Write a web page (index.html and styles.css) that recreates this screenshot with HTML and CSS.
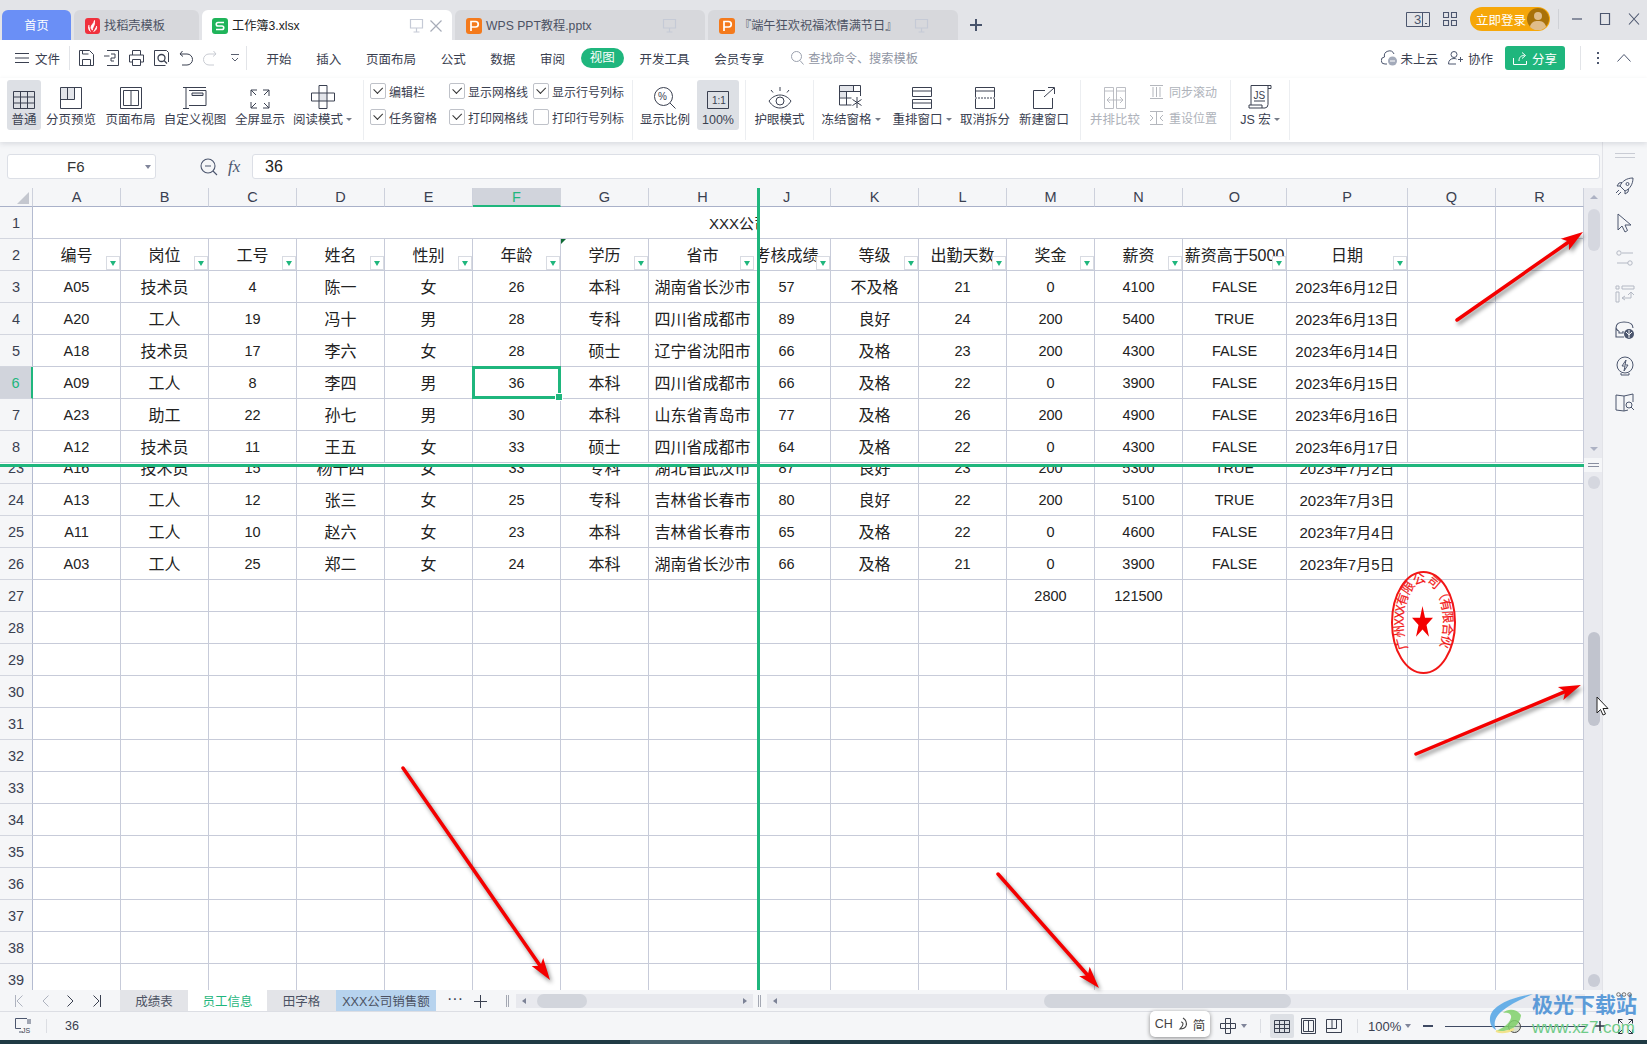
FILE: index.html
```html
<!DOCTYPE html>
<html lang="zh-CN">
<head>
<meta charset="utf-8">
<title>工作簿3.xlsx</title>
<link rel="stylesheet" href="styles.css">
</head>
<body>
<div class="app">

<header class="tabbar">
  <div class="tab home">首页</div>
  <div class="tab t-daoke">
    <svg class="ticon" width="15" height="16" viewBox="0 0 15 16"><rect width="15" height="16" rx="3" fill="#f0313d"/><path d="M9.5 2.5C9 6 6 6.5 6 9.5c0 1 .5 2 1.5 2.5C7 9.5 10 8.5 9.5 2.5zM4 7c-1 2-.5 5 1.5 6.5M11.5 8c.5 2.5-.5 4.5-3 5.5" fill="#fff" stroke="#fff" stroke-width=".9"/></svg>
    <span>找稻壳模板</span>
  </div>
  <div class="tab t-active">
    <svg class="ticon" width="16" height="16" viewBox="0 0 16 16"><rect width="16" height="16" rx="3" fill="#1fb45a"/><path d="M12 4.5H6a1.7 1.7 0 0 0 0 3.5h4a1.7 1.7 0 0 1 0 3.5H4" fill="none" stroke="#fff" stroke-width="1.6"/></svg>
    <span class="tname">工作簿3.xlsx</span>
    <svg class="pin" width="15" height="15" viewBox="0 0 15 15"><path d="M1.5 1.5h12V10h-12zM7.5 10v4M4.5 14h6" fill="none" stroke="#c5cad6" stroke-width="1.2"/></svg>
    <svg class="closex" width="14" height="14" viewBox="0 0 14 14"><path d="M1.5 1.5l11 11M12.5 1.5l-11 11" stroke="#a7acb8" stroke-width="1.2"/></svg>
  </div>
  <div class="tab t-doc">
    <svg class="ticon" width="16" height="16" viewBox="0 0 16 16"><rect width="16" height="16" rx="3" fill="#f47a1c"/><path d="M5 13V3.5h4.5a2.7 2.7 0 0 1 0 5.5H5" fill="none" stroke="#fff" stroke-width="1.7"/></svg>
    <span class="tname">WPS PPT教程.pptx</span>
    <svg class="pin pin-doc" width="15" height="15" viewBox="0 0 15 15"><path d="M1.5 1.5h12V10h-12zM7.5 10v4M4.5 14h6" fill="none" stroke="#c5cad6" stroke-width="1.2"/></svg>
  </div>
  <div class="tab t-doc">
    <svg class="ticon" width="16" height="16" viewBox="0 0 16 16"><rect width="16" height="16" rx="3" fill="#f47a1c"/><path d="M5 13V3.5h4.5a2.7 2.7 0 0 1 0 5.5H5" fill="none" stroke="#fff" stroke-width="1.7"/></svg>
    <span class="tname">『端午狂欢祝福浓情满节日』</span>
    <svg class="pin pin-doc2" width="15" height="15" viewBox="0 0 15 15"><path d="M1.5 1.5h12V10h-12zM7.5 10v4M4.5 14h6" fill="none" stroke="#c5cad6" stroke-width="1.2"/></svg>
  </div>
  <svg class="plus" width="14" height="14" viewBox="0 0 14 14"><path d="M7 1v12M1 7h12" stroke="#48536b" stroke-width="2"/></svg>
  <div class="winctl">
    <svg class="wc-3" width="24" height="15" viewBox="0 0 24 15"><path d="M.5.5h23v14H.5zM16.5.5v14" fill="none" stroke="#4c566e"/><path d="M19 11.5h2" stroke="#4c566e"/><text x="8" y="12" class="wc-num">3</text></svg>
    <svg class="wc-grid" width="14" height="14" viewBox="0 0 14 14"><path d="M.5.5h5v5h-5zM8.5.5h5v5h-5zM.5 8.5h5v5h-5zM8.5 8.5h5v5h-5z" fill="none" stroke="#4c566e" stroke-width="1.1"/></svg>
    <div class="login"><span>立即登录</span>
      <svg width="22" height="22" viewBox="0 0 22 22"><circle cx="11" cy="11" r="11" fill="#a9720a"/><circle cx="11" cy="8" r="4" fill="#e0bd8a"/><path d="M3 19c1-5 4-6 8-6s7 1 8 6a11 11 0 0 1-16 0z" fill="#e0bd8a"/></svg>
    </div>
    <i class="wsep"></i>
    <svg class="wc-min" width="12" height="12" viewBox="0 0 12 12"><path d="M1 6h10" stroke="#4c566e" stroke-width="1.2"/></svg>
    <svg class="wc-max" width="12" height="14" viewBox="0 0 12 14"><path d="M1.5 1.5h9v11h-9z" fill="none" stroke="#4c566e" stroke-width="1.2"/></svg>
    <svg class="wc-close" width="12" height="14" viewBox="0 0 12 14"><path d="M1 1.5l10 11M11 1.5l-10 11" stroke="#4c566e" stroke-width="1.1"/></svg>
  </div>
</header>

<nav class="menubar">
  <svg class="m-burger" width="14" height="12" viewBox="0 0 14 12"><path d="M0 1.5h14M0 6h14M0 10.5h14" stroke="#3a4050" stroke-width="1.1"/></svg>
  <span class="m-file">文件</span>
  <i class="msep"></i>
  <div class="qa">
    <svg width="15" height="16" viewBox="0 0 15 16"><path d="M.5.5h10l4 4v11H.5zM3.5 15.5v-6h8v6M3.5.5V4h6" fill="none" stroke="#3a4050"/></svg>
    <svg width="15" height="16" viewBox="0 0 15 16"><path d="M3 .5h11.5v15H3M0 6h5.5M7 4h4v4H7v3h3" fill="none" stroke="#3a4050"/></svg>
    <svg width="15" height="16" viewBox="0 0 15 16"><path d="M3.5 5V.5h8V5M3.5 12H.5V5h14v7h-3M3.5 9.5h8v6h-8z" fill="none" stroke="#3a4050"/></svg>
    <svg width="15" height="16" viewBox="0 0 15 16"><path d="M14.5 12V2.5l-2-2H.5v15h11" fill="none" stroke="#3a4050"/><circle cx="7.5" cy="8" r="3.5" fill="none" stroke="#3a4050" stroke-width="1.3"/><path d="M10 10.5l3 3" stroke="#3a4050" stroke-width="1.3"/></svg>
    <svg width="14" height="16" viewBox="0 0 14 16"><path d="M3.5 1L1 4l3 2.5M1 4h7a5 5 0 0 1 0 11H3" fill="none" stroke="#3a4050"/></svg>
    <svg width="14" height="16" viewBox="0 0 14 16"><path d="M10.5 1L13 4l-3 2.5M13 4H6a5 5 0 0 0 0 11h5" fill="none" stroke="#c9ccd3"/></svg>
    <svg class="qa-more" width="8" height="10" viewBox="0 0 8 10"><path d="M0 1.5h8M1 5l3 3 3-3" fill="none" stroke="#5a6070"/></svg>
  </div>
  <i class="msep msep2"></i>
  <div class="mtabs">
    <span>开始</span><span>插入</span><span>页面布局</span><span>公式</span><span>数据</span><span>审阅</span><span class="mtab-on">视图</span><span>开发工具</span><span>会员专享</span>
  </div>
  <div class="search">
    <svg width="13" height="14" viewBox="0 0 13 14"><circle cx="5.5" cy="5.5" r="5" fill="none" stroke="#9aa0ad"/><path d="M9 9.5l3.5 4" stroke="#9aa0ad"/></svg>
    <span>查找命令、搜索模板</span>
  </div>
  <div class="m-right">
    <svg width="17" height="16" viewBox="0 0 17 16"><path d="M6 14H4a3.5 3.5 0 0 1-.5-7A5 5 0 0 1 13 4" fill="none" stroke="#4c566e"/><circle cx="11.5" cy="11" r="4.5" fill="#a3aaba"/><path d="M9 11h5" stroke="#fff"/></svg>
    <span class="mr-t mr-t1">未上云</span>
    <svg class="mr-i" width="16" height="14" viewBox="0 0 16 14"><circle cx="6" cy="3.5" r="3" fill="none" stroke="#4c566e"/><path d="M.5 13c0-3.5 2-5.5 5.5-5.5 1 0 2 .2 2.5.6M8 13H.5M12.5 6v5M10 8.5h5" fill="none" stroke="#4c566e"/></svg>
    <span class="mr-t">协作</span>
    <div class="share">
      <svg width="14" height="13" viewBox="0 0 14 13"><path d="M.5 6v6.500h13V9M6 9c0-4 2-5.500 5.500-5.500M9 .5l3.500 3-3.500 3" fill="none" stroke="#fff"/></svg>
      <span>分享</span>
    </div>
    <i class="msep msep3"></i>
    <svg class="mr-dots" width="4" height="14" viewBox="0 0 4 14"><path d="M2 1v2M2 6v2M2 11v2" stroke="#4c566e" stroke-width="2"/></svg>
    <svg class="mr-up" width="14" height="8" viewBox="0 0 14 8"><path d="M.5 7.5L7 .5l6.5 7" fill="none" stroke="#4c566e"/></svg>
  </div>
</nav>

<section class="ribbon">
  <div class="rb w34 on">
    <svg width="22" height="18" viewBox="0 0 22 18"><path d="M.5.5h21v17H.5zM7.5.5v17M14.5.5v17M.5 6h21M.5 12h21" fill="none" stroke="#3a4050"/></svg>
    <span>普通</span>
  </div>
  <div class="rb w60">
    <svg width="22" height="22" viewBox="0 0 22 22"><path d="M.5 12.5h14V.5H.5z" fill="#e3e5ea"/><path d="M.5.5h21v21H.5zM7.5.5v12M14.5.5v12M.5 12.5h14" fill="none" stroke="#3a4050"/></svg>
    <span>分页预览</span>
  </div>
  <div class="rb w59">
    <svg width="22" height="22" viewBox="0 0 22 22"><path d="M.5.5h21v21H.5zM3.5 3.5h15v15h-15zM11 3.5v15" fill="none" stroke="#3a4050"/></svg>
    <span>页面布局</span>
  </div>
  <div class="rb w70">
    <svg width="24" height="22" viewBox="0 0 24 22"><path d="M0 .5h6M0 21.5h6M3 .5v21M6 3.5h17v15H6" fill="none" stroke="#3a4050"/><path d="M9 8.5h11V6H9z" fill="#e3e5ea" stroke="#3a4050"/><path d="M6 .5h17" stroke="#3a4050"/></svg>
    <span>自定义视图</span>
  </div>
  <div class="rb w60">
    <svg width="20" height="20" viewBox="0 0 20 20"><path d="M1 7V1h6M1 1l5 5M19 7V1h-6M19 1l-5 5M1 13v6h6M1 19l5-5M19 13v6h-6M19 19l-5-5" fill="none" stroke="#3a4050"/></svg>
    <span>全屏显示</span>
  </div>
  <div class="rb w65">
    <svg width="24" height="24" viewBox="0 0 24 24"><path d="M8 8h8v8H8z" fill="#e3e5ea"/><path d="M8 .5h8V8h7.5v8H16v7.5H8V16H.5V8H8zM8 8v8M16 8v8M8 8h8M8 16h8" fill="none" stroke="#3a4050"/></svg>
    <span class="car">阅读模式</span>
  </div>
  <i class="rsep rs1"></i>
  <div class="checks">
    <label class="ck on">编辑栏</label>
    <label class="ck on">显示网格线</label>
    <label class="ck on">显示行号列标</label>
    <label class="ck on">任务窗格</label>
    <label class="ck on">打印网格线</label>
    <label class="ck">打印行号列标</label>
  </div>
  <i class="rsep"></i>
  <div class="rb w64">
    <svg width="22" height="22" viewBox="0 0 22 22"><circle cx="9.5" cy="9.5" r="9" fill="none" stroke="#3a4050"/><path d="M16 16l5.5 5.5" stroke="#3a4050"/><text x="4" y="13" class="pct">%</text></svg>
    <span>显示比例</span>
  </div>
  <div class="rb w42 on">
    <svg width="22" height="18" viewBox="0 0 22 18"><path d="M.5.5h21v17H.5z" fill="none" stroke="#3a4050"/><text x="5" y="13" class="oneone">1:1</text></svg>
    <span>100%</span>
  </div>
  <i class="rsep rs2"></i>
  <div class="rb w67">
    <svg width="24" height="22" viewBox="0 0 24 22"><path d="M1 14c3-4 7-6 11-6s8 2 11 6c-3 5-7 7-11 7s-8-2-11-7z" fill="none" stroke="#3a4050"/><circle cx="12" cy="14" r="4" fill="none" stroke="#3a4050"/><path d="M12 0v4M3 3l2 2.5M21 3l-2 2.5" stroke="#3a4050"/></svg>
    <span>护眼模式</span>
  </div>
  <i class="rsep"></i>
  <div class="rb w74">
    <svg width="24" height="24" viewBox="0 0 24 24"><path d="M.5.5H14V6H7v6H.5z" fill="#e3e5ea"/><path d="M.5.5h21V11M.5.5V20h12M.5 6.5h21M.5 13h12M7.500 6.5V20M14.5.5v6" fill="none" stroke="#3a4050"/><path d="M18 12v11M13.5 14.5l9 6M22.5 14.5l-9 6" stroke="#3a4050"/></svg>
    <span class="car">冻结窗格</span>
  </div>
  <div class="rb w68">
    <svg width="20" height="22" viewBox="0 0 20 22"><path d="M.5.5h19v9H.5zM.5 12.5h19v9H.5zM.5 4h19M.5 16h19" fill="none" stroke="#3a4050"/></svg>
    <span class="car">重排窗口</span>
  </div>
  <div class="rb w58">
    <svg width="20" height="22" viewBox="0 0 20 22"><path d="M.5 10V.5h19V10M.5 12v9.5h19V12M.5 4h19" fill="none" stroke="#3a4050"/><path d="M0 11h20" stroke="#3a4050" stroke-dasharray="2 1"/></svg>
    <span>取消拆分</span>
  </div>
  <div class="rb w60">
    <svg width="22" height="22" viewBox="0 0 22 22"><path d="M12 3.5H.5v18h19V11M11 10L21 1M15 .5h6.5V7" fill="none" stroke="#3a4050"/></svg>
    <span>新建窗口</span>
  </div>
  <i class="rsep rs3"></i>
  <div class="rb w68 dis">
    <svg width="22" height="22" viewBox="0 0 22 22"><path d="M.5 21.5V.5h9v21zM12.5 21.5V.5h9v21zM.5 4h9M12.5 4h9M3 13h16M6 10l-3 3 3 3M16 10l3 3-3 3" fill="none" stroke="#b4b7bd" stroke-width=".9"/></svg>
    <span>并排比较</span>
  </div>
  <div class="rstack">
    <div class="rs-item">
      <svg width="13" height="14" viewBox="0 0 13 14"><path d="M0 .5h13M0 13.5h13M3 2v10M6.5 2v10M10 2v10" fill="none" stroke="#b4b7bd"/></svg>
      <span>同步滚动</span>
    </div>
    <div class="rs-item">
      <svg width="13" height="14" viewBox="0 0 13 14"><path d="M0 .5h13M0 13.5h13M6.5 1v12M0 4l3 3-3 3M13 4l-3 3 3 3" fill="none" stroke="#b4b7bd"/></svg>
      <span>重设位置</span>
    </div>
  </div>
  <i class="rsep"></i>
  <div class="rb w58">
    <svg width="24" height="24" viewBox="0 0 24 24"><path d="M3 20V.5h17v19a3.5 3.5 0 0 1-3 3.5H1v-3h13v3M20 .5h3v3h-3" fill="none" stroke="#3a4050"/><text x="5.500" y="14" class="jsico">JS</text><path d="M6 16h11" stroke="#3a4050"/></svg>
    <span class="car">JS 宏</span>
  </div>
  <i class="rsep"></i>
</section>

<main class="main">
  <div class="work">
    <div class="formula">
      <div class="namebox"><span>F6</span><i class="tri"></i></div>
      <svg class="fz" width="18" height="18" viewBox="0 0 18 18"><circle cx="8" cy="8" r="7" fill="none" stroke="#4c566e" stroke-width="1.1"/><path d="M5 8h6M13 13l4 4" stroke="#4c566e" stroke-width="1.1"/></svg>
      <span class="fx">fx</span>
      <div class="finput">36</div>
    </div>

    <div class="sheetarea">
      <div class="grid">
        <table class="head">
          <colgroup><col class="c-rh"><col class="c88" span="7"><col class="c-h"><col class="c-j"><col class="c88" span="4"><col class="c-o"><col class="c-p"><col class="c88" span="2"></colgroup>
          <tr><th class="corner"><i></i></th><th>A</th><th>B</th><th>C</th><th>D</th><th>E</th><th class="act">F</th><th>G</th><th class="h">H</th><th class="j">J</th><th>K</th><th>L</th><th>M</th><th>N</th><th>O</th><th>P</th><th>Q</th><th>R</th></tr>
        </table>
        <div class="pane pane-top">
          <table>
            <colgroup><col class="c-rh"><col class="c88" span="7"><col class="c-h"><col class="c-j"><col class="c88" span="4"><col class="c-o"><col class="c-p"><col class="c88" span="2"></colgroup>
            <tr><th>1</th><td colspan="8" class="title">XXX公司员工信息表</td><td colspan="7"></td><td></td><td></td></tr>
            <tr><th>2</th><td class="z">编号<i class="flt"></i></td><td class="z">岗位<i class="flt"></i></td><td class="z">工号<i class="flt"></i></td><td class="z">姓名<i class="flt"></i></td><td class="z">性别<i class="flt"></i></td><td class="z note">年龄<i class="flt"></i></td><td class="z">学历<i class="flt"></i></td><td class="z h">省市<i class="flt fh"></i></td><td class="z j"><span class="over">考核成绩</span><i class="flt"></i></td><td class="z">等级<i class="flt"></i></td><td class="z">出勤天数<i class="flt"></i></td><td class="z">奖金<i class="flt"></i></td><td class="z">薪资<i class="flt"></i></td><td class="z">薪资高于5000<i class="flt"></i></td><td class="z">日期<i class="flt"></i></td><td></td><td></td></tr>
            <tr><th>3</th><td>A05</td><td class="z">技术员</td><td>4</td><td class="z">陈一</td><td class="z">女</td><td>26</td><td class="z">本科</td><td class="z h">湖南省长沙市</td><td class="j">57</td><td class="z">不及格</td><td>21</td><td>0</td><td>4100</td><td>FALSE</td><td class="d">2023年6月12日</td><td></td><td></td></tr>
            <tr><th>4</th><td>A20</td><td class="z">工人</td><td>19</td><td class="z">冯十</td><td class="z">男</td><td>28</td><td class="z">专科</td><td class="z h">四川省成都市</td><td class="j">89</td><td class="z">良好</td><td>24</td><td>200</td><td>5400</td><td>TRUE</td><td class="d">2023年6月13日</td><td></td><td></td></tr>
            <tr><th>5</th><td>A18</td><td class="z">技术员</td><td>17</td><td class="z">李六</td><td class="z">女</td><td>28</td><td class="z">硕士</td><td class="z h">辽宁省沈阳市</td><td class="j">66</td><td class="z">及格</td><td>23</td><td>200</td><td>4300</td><td>FALSE</td><td class="d">2023年6月14日</td><td></td><td></td></tr>
            <tr><th class="act-r">6</th><td>A09</td><td class="z">工人</td><td>8</td><td class="z">李四</td><td class="z">男</td><td class="cur">36<i class="sel"></i></td><td class="z">本科</td><td class="z h">四川省成都市</td><td class="j">66</td><td class="z">及格</td><td>22</td><td>0</td><td>3900</td><td>FALSE</td><td class="d">2023年6月15日</td><td></td><td></td></tr>
            <tr><th>7</th><td>A23</td><td class="z">助工</td><td>22</td><td class="z">孙七</td><td class="z">男</td><td>30</td><td class="z">本科</td><td class="z h">山东省青岛市</td><td class="j">77</td><td class="z">及格</td><td>26</td><td>200</td><td>4900</td><td>FALSE</td><td class="d">2023年6月16日</td><td></td><td></td></tr>
            <tr><th>8</th><td>A12</td><td class="z">技术员</td><td>11</td><td class="z">王五</td><td class="z">女</td><td>33</td><td class="z">硕士</td><td class="z h">四川省成都市</td><td class="j">64</td><td class="z">及格</td><td>22</td><td>0</td><td>4300</td><td>FALSE</td><td class="d">2023年6月17日</td><td></td><td></td></tr>
          </table>
        </div>
        <div class="hsplit"></div>
        <div class="pane pane-bottom">
          <table>
            <colgroup><col class="c-rh"><col class="c88" span="7"><col class="c-h"><col class="c-j"><col class="c88" span="4"><col class="c-o"><col class="c-p"><col class="c88" span="2"></colgroup>
            <tr class="r23"><th>23</th><td>A16</td><td class="z">技术员</td><td>15</td><td class="z">杨十四</td><td class="z">女</td><td>33</td><td class="z">专科</td><td class="z h">湖北省武汉市</td><td class="j">87</td><td class="z">良好</td><td>23</td><td>200</td><td>5300</td><td>TRUE</td><td class="d">2023年7月2日</td><td></td><td></td></tr>
            <tr><th>24</th><td>A13</td><td class="z">工人</td><td>12</td><td class="z">张三</td><td class="z">女</td><td>25</td><td class="z">专科</td><td class="z h">吉林省长春市</td><td class="j">80</td><td class="z">良好</td><td>22</td><td>200</td><td>5100</td><td>TRUE</td><td class="d">2023年7月3日</td><td></td><td></td></tr>
            <tr><th>25</th><td>A11</td><td class="z">工人</td><td>10</td><td class="z">赵六</td><td class="z">女</td><td>23</td><td class="z">本科</td><td class="z h">吉林省长春市</td><td class="j">65</td><td class="z">及格</td><td>22</td><td>0</td><td>4600</td><td>FALSE</td><td class="d">2023年7月4日</td><td></td><td></td></tr>
            <tr><th>26</th><td>A03</td><td class="z">工人</td><td>25</td><td class="z">郑二</td><td class="z">女</td><td>24</td><td class="z">本科</td><td class="z h">湖南省长沙市</td><td class="j">66</td><td class="z">及格</td><td>21</td><td>0</td><td>3900</td><td>FALSE</td><td class="d">2023年7月5日</td><td></td><td></td></tr>
            <tr><th>27</th><td></td><td></td><td></td><td></td><td></td><td></td><td></td><td></td><td></td><td></td><td></td><td>2800</td><td>121500</td><td></td><td></td><td></td><td></td></tr>
            <tr><th>28</th><td></td><td></td><td></td><td></td><td></td><td></td><td></td><td></td><td></td><td></td><td></td><td></td><td></td><td></td><td></td><td></td><td></td></tr>
            <tr><th>29</th><td></td><td></td><td></td><td></td><td></td><td></td><td></td><td></td><td></td><td></td><td></td><td></td><td></td><td></td><td></td><td></td><td></td></tr>
            <tr><th>30</th><td></td><td></td><td></td><td></td><td></td><td></td><td></td><td></td><td></td><td></td><td></td><td></td><td></td><td></td><td></td><td></td><td></td></tr>
            <tr><th>31</th><td></td><td></td><td></td><td></td><td></td><td></td><td></td><td></td><td></td><td></td><td></td><td></td><td></td><td></td><td></td><td></td><td></td></tr>
            <tr><th>32</th><td></td><td></td><td></td><td></td><td></td><td></td><td></td><td></td><td></td><td></td><td></td><td></td><td></td><td></td><td></td><td></td><td></td></tr>
            <tr><th>33</th><td></td><td></td><td></td><td></td><td></td><td></td><td></td><td></td><td></td><td></td><td></td><td></td><td></td><td></td><td></td><td></td><td></td></tr>
            <tr><th>34</th><td></td><td></td><td></td><td></td><td></td><td></td><td></td><td></td><td></td><td></td><td></td><td></td><td></td><td></td><td></td><td></td><td></td></tr>
            <tr><th>35</th><td></td><td></td><td></td><td></td><td></td><td></td><td></td><td></td><td></td><td></td><td></td><td></td><td></td><td></td><td></td><td></td><td></td></tr>
            <tr><th>36</th><td></td><td></td><td></td><td></td><td></td><td></td><td></td><td></td><td></td><td></td><td></td><td></td><td></td><td></td><td></td><td></td><td></td></tr>
            <tr><th>37</th><td></td><td></td><td></td><td></td><td></td><td></td><td></td><td></td><td></td><td></td><td></td><td></td><td></td><td></td><td></td><td></td><td></td></tr>
            <tr><th>38</th><td></td><td></td><td></td><td></td><td></td><td></td><td></td><td></td><td></td><td></td><td></td><td></td><td></td><td></td><td></td><td></td><td></td></tr>
            <tr><th>39</th><td></td><td></td><td></td><td></td><td></td><td></td><td></td><td></td><td></td><td></td><td></td><td></td><td></td><td></td><td></td><td></td><td></td></tr>
          </table>
        </div>
        <div class="vsplit"></div>
      </div>
      <div class="vscroll">
        <div class="vtrack vt-top">
          <i class="arr-up"></i>
          <i class="thumb th-top"></i>
          <i class="arr-down"></i>
        </div>
        <div class="vhandle"><i></i></div>
        <div class="vtrack vt-bottom">
          <i class="vcirc vc-first"></i>
          <i class="thumb th-bottom"></i>
          <i class="vcirc vc-last"></i>
        </div>
      </div>
    </div>

    <div class="sheetbar">
      <div class="snav">
        <svg width="8" height="12" viewBox="0 0 8 12"><path d="M.5 0v12M7.5.5L2 6l5.5 5.5" fill="none" stroke="#aeb3bf"/></svg>
        <svg width="7" height="12" viewBox="0 0 7 12"><path d="M6.5.5L1 6l5.5 5.5" fill="none" stroke="#aeb3bf"/></svg>
        <svg width="7" height="12" viewBox="0 0 7 12"><path d="M.5.5L6 6 .5 11.5" fill="none" stroke="#3a4050"/></svg>
        <svg width="8" height="12" viewBox="0 0 8 12"><path d="M.5.5L6 6 .5 11.5M7.5 0v12" fill="none" stroke="#3a4050"/></svg>
      </div>
      <div class="stab">成绩表</div>
      <div class="stab stab-on">员工信息</div>
      <div class="stab stab-3">田字格</div>
      <div class="stab stab-sel">XXX公司销售额</div>
      <span class="smore">···</span>
      <svg class="splus" width="13" height="13" viewBox="0 0 13 13"><path d="M6.5 0v13M0 6.5h13" stroke="#3a4050"/></svg>
      <i class="grip g1"></i>
      <div class="hs hs-left"><i class="la"></i><i class="hthumb ht-left"></i><i class="ra"></i></div>
      <i class="grip g2"></i>
      <div class="hs hs-right"><i class="la"></i><i class="hthumb ht-right"></i></div>
    </div>
  </div>

  <aside class="side">
    <i class="s-dash"></i>
    <svg class="s-i" width="20" height="20" viewBox="0 0 20 20"><path d="M7 11l-2-2c2-5 7-8 13-8 0 6-3 11-8 13l-2-2zM5 9H2l2-3 3-.5M10 14v3l3-2 .5-3M4 13l-3 3M6 15l-3 3" fill="none" stroke="#4c566e"/><circle cx="12.5" cy="7" r="1.5" fill="none" stroke="#4c566e"/></svg>
    <svg class="s-i" width="20" height="20" viewBox="0 0 20 20"><path d="M3 1v16l4-4 3 6 2.5-1.5L10 12h6z" fill="none" stroke="#4c566e"/></svg>
    <svg class="s-i" width="20" height="20" viewBox="0 0 20 20"><path d="M7 4h11M2 14h11" stroke="#b4b9c4"/><circle cx="4" cy="4" r="2.2" fill="none" stroke="#b4b9c4"/><circle cx="15" cy="14" r="2.2" fill="none" stroke="#b4b9c4"/></svg>
    <svg class="s-i" width="20" height="20" viewBox="0 0 20 20"><path d="M1 2h3v3H1zM1 8h3v10H1zM7 2h12v3H7zM7 14h9V8M13 11l3-3 3 3M7 14l3-2M7 14l3 2" fill="none" stroke="#b4b9c4"/></svg>
    <svg class="s-i" width="20" height="20" viewBox="0 0 20 20"><path d="M1 8c0-4 3-6 8-6s9 2 9 6M1 8v9h8M4 11v2h4v-2M1 8c1 2 2 3 3 3" fill="none" stroke="#4c566e" stroke-width="1.1"/><circle cx="14" cy="14" r="5" fill="#4c566e"/><path d="M14 10v8M11 12l3 3 3-3" stroke="#f5f6f8" fill="none"/></svg>
    <svg class="s-i" width="20" height="20" viewBox="0 0 20 20"><circle cx="10" cy="9" r="8" fill="none" stroke="#4c566e"/><path d="M6 17v2h8v-2" fill="none" stroke="#4c566e"/><path d="M11 4L7 10h3l-1 5 4-6h-3z" fill="none" stroke="#4c566e"/></svg>
    <svg class="s-i" width="20" height="20" viewBox="0 0 20 20"><path d="M1 3l8 1v15l-8-1zM9 4l9-2v8M9 19l4-1" fill="none" stroke="#4c566e"/><circle cx="14" cy="13" r="3" fill="none" stroke="#4c566e"/><path d="M16 15l3 3" stroke="#4c566e"/></svg>
  </aside>
</main>

<footer class="status">
  <svg class="st-ico" width="16" height="16" viewBox="0 0 16 16"><path d="M12 .5H.5v10H6M4 14h4M13 1v5M15 1v5" fill="none" stroke="#4c566e"/><text x="7" y="15" class="jsmini">JS</text></svg>
  <i class="stsep"></i>
  <span class="st-val">36</span>
  <div class="st-right">
    <svg class="st-cross" width="16" height="16" viewBox="0 0 16 16"><path d="M5.5.5h5v5h5v5h-5v5h-5v-5H.5v-5h5zM5.5 5.5h5v5h-5z" fill="none" stroke="#3a4050"/></svg>
    <i class="tri st-tri"></i>
    <i class="stsep st-s1"></i>
    <div class="vb vb-on"><svg width="16" height="13" viewBox="0 0 16 13"><path d="M.5.5h15v12H.5zM5.5.5v12M10.5.5v12M.5 4.5h15M.5 8.5h15" fill="none" stroke="#3a4050"/></svg></div>
    <div class="vb"><svg width="15" height="16" viewBox="0 0 15 16"><path d="M.5.5h14v15H.5zM2.5 2.5h10v11h-10zM7.5 2.5v11" fill="none" stroke="#3a4050"/></svg></div>
    <div class="vb"><svg width="16" height="14" viewBox="0 0 16 14"><path d="M.5.5h15v13H.5zM.5 9.5h10V.5M6 .5v9" fill="none" stroke="#3a4050"/></svg></div>
    <i class="stsep st-s2"></i>
    <span class="zoomv">100%</span>
    <i class="tri st-tri2"></i>
    <i class="zminus"></i>
    <div class="slider"><i></i></div>
    <svg class="zplus" width="10" height="10" viewBox="0 0 10 10"><path d="M5 0v10M0 5h10" stroke="#2d3444" stroke-width="1.5"/></svg>
    <svg class="zfull" width="15" height="15" viewBox="0 0 15 15"><path d="M.5 4.5V.5h4M.5.5l4 4M14.5 4.5V.5h-4M14.5.5l-4 4M.5 10.5v4h4M.5 14.5l4-4M14.5 10.5v4h-4M14.5 14.5l-4-4" fill="none" stroke="#2d3444"/></svg>
  </div>
</footer>
<div class="taskbar"><i></i></div>

<div class="ime">CH <svg width="14" height="14" viewBox="0 0 14 14"><path d="M7 1c3 2 4 5 3 8-1 2-3 3-6 3 2-2 3-3 3-5 0-1-1-2-2-2" fill="none" stroke="#444" stroke-width="1.1"/></svg> 简</div>

<div class="mark">
  <svg class="mark-logo" width="46" height="42" viewBox="0 0 46 42"><path d="M45 1C25 4 3 12 2 25c-.5 6 2 10 6 12-3-7-1-13 6-19C22 11 34 6 45 1z" fill="#5aa9e6" fill-opacity=".9"/><path d="M8 38c8 2 24-2 25-16-4-6-13-7-18-2 5-1 9 1 8 5-2 6-8 10-15 13z" fill="#7fd06a" fill-opacity=".85"/><path d="M8 38c5 2 12 1 18-2" fill="none" stroke="#f2e38b" stroke-width="2"/></svg>
  <div class="mark-txt">
    <span class="mark-zh">极光下载站</span>
    <span class="mark-en">www.xz7.com</span>
  </div>
  <svg class="mark-dots" width="16" height="5" viewBox="0 0 16 5"><circle cx="2.5" cy="2.5" r="1.8"/><circle cx="8" cy="2.5" r="1.8"/><circle cx="13.5" cy="2.5" r="1.8"/></svg>
</div>

<svg class="overlay" width="1647" height="1044" viewBox="0 0 1647 1044">
  <defs>
    <marker id="head" markerUnits="userSpaceOnUse" markerWidth="40" markerHeight="30" refX="0" refY="0" orient="auto" overflow="visible">
      <path d="M-8-7L14 0-8 7-3 0z" fill="#f40000"/>
    </marker>
  </defs>
  <g class="stamp">
    <ellipse cx="1423.5" cy="622.5" rx="31.5" ry="50.5" fill="none" stroke="#f21616" stroke-width="2"/>
    <path id="stampcurve" d="M1408 648A20 40 0 1 1 1439 648" fill="none"/>
    <text class="stamptext"><textPath href="#stampcurve" textLength="158" lengthAdjust="spacing">广州XXX有限公司（有限合伙）</textPath></text>
    <polygon points="1422.5,606 1425,617.7 1433,617.7 1426.5,625 1429,636.8 1422.5,629.5 1416,636.8 1418.5,625 1412,617.7 1420,617.7" fill="#f40000"/>
  </g>
  <g class="arrows">
    <line x1="1457" y1="320" x2="1571.5" y2="240" marker-end="url(#head)"/>
    <line x1="1416" y1="754" x2="1568" y2="690.4" marker-end="url(#head)"/>
    <line x1="403" y1="768" x2="542" y2="968.5" marker-end="url(#head)"/>
    <line x1="998" y1="874" x2="1089.7" y2="977.5" marker-end="url(#head)"/>
  </g>
  <path d="M1597 697v16l3.5-3.5 2.5 5.5 2.5-1-2.5-5.5h5z" fill="#fff" stroke="#222"/>
</svg>

</div>
</body>
</html>
```

FILE: styles.css
```css
* { box-sizing: border-box; }
html, body { margin: 0; padding: 0; }
body {
  font-family: "Liberation Sans", "Noto Sans CJK SC", sans-serif;
  color: #3a4050;
  background: #f5f6f8;
}
i { display: block; font-style: normal; }
svg { display: block; flex: none; }
.app { position: relative; width: 1647px; height: 1044px; overflow: hidden; display: flex; flex-direction: column; }

/* title tabs */
.tabbar { height: 40px; flex: none; background: #e3e4e8; display: flex; align-items: flex-end; padding-left: 2px; gap: 3px; }
.tab { height: 30px; border-radius: 6px 6px 0 0; display: flex; align-items: center; font-size: 12.2px; background: #d7d8dc; color: #4c5263; white-space: nowrap; }
.home { width: 69px; justify-content: center; background: #6a8ff6; color: #fff; }
.t-daoke { width: 125px; padding-left: 11px; gap: 4px; }
.t-active { width: 250px; padding-left: 10px; background: #fff; color: #222; gap: 4px; }
.t-doc { width: 250px; padding-left: 11px; gap: 4px; }
.ticon { margin-top: 1px; }
.pin { margin-left: 110px; }
.t-active .pin { margin-left: 105px; }
.pin-doc { margin-left: 66px; }
.pin-doc2 { margin-left: 13px; }
.closex { margin-left: 1px; margin-top: 1px; }
.plus { margin: 0 0 8px 8px; }
.winctl { margin-left: auto; height: 40px; display: flex; align-items: center; width: 241px; position: relative; top: -1px; }
.wc-num { font: 13px "Liberation Sans", sans-serif; fill: #4c566e; }
.wc-grid { margin-left: 13px; }
.login { width: 80px; height: 24px; margin-left: 13px; border-radius: 12px; background: #f6a70a; color: #fff; font-size: 12.5px; display: flex; align-items: center; justify-content: space-between; padding: 0 1px 0 6px; }
.wsep { width: 1px; height: 20px; background: #cfd1d6; margin-left: 8px; }
.wc-min { margin-left: 12px; }
.wc-max { margin-left: 16px; }
.wc-close { margin-left: 17px; }

/* menu */
.menubar { height: 38px; flex: none; background: #fff; display: flex; align-items: center; font-size: 12.5px; padding: 0 0 2px 15px; color: #3a4050; }
.m-file { margin-left: 6px; }
.msep { width: 1px; height: 24px; background: #e2e4e8; margin-left: 9px; }
.qa { display: flex; align-items: center; gap: 10px; margin-left: 9px; }
.qa .qa-more { margin-left: 4px; }
.msep2 { margin-left: 7px; }
.mtabs { display: flex; gap: 24.7px; align-items: center; margin-left: 19.5px; }
.mtab-on { background: #1fb67d; color: #fff; border-radius: 10px; line-height: 20px; padding: 0 9px; margin: 0 -9px; }
.search { display: flex; align-items: center; gap: 4px; margin-left: 27px; font-size: 12.2px; color: #8f95a3; }
.m-right { margin-left: auto; display: flex; align-items: center; padding-right: 16px; }
.mr-t { margin-left: 4px; font-size: 12.5px; }
.mr-t1 { margin-left: 2px; }
.mr-i { margin-left: 10px; }
.share { width: 60px; height: 24px; margin-left: 12px; background: #1fb67d; color: #fff; border-radius: 3px; display: flex; align-items: center; justify-content: center; gap: 5px; font-size: 12.5px; }
.msep3 { margin-left: 15px; }
.mr-dots { margin-left: 15px; }
.mr-up { margin-left: 17px; }

/* ribbon */
.ribbon { height: 64px; flex: none; background: #fff; display: flex; align-items: flex-start; padding: 2px 0 0 7px; box-shadow: 0 2px 5px rgba(40, 50, 70, .13); position: relative; z-index: 3; font-size: 12.5px; }
.rb { height: 50px; display: flex; flex-direction: column; align-items: center; justify-content: space-between; flex: none; padding: 1px 0 1px; border-radius: 3px; white-space: nowrap; }
.rb > svg { margin: auto 0 2px; }
.rb > span { line-height: 18px; height: 18px; }
.rb.on { background: #dde0e5; }
.rb.dis { color: #aeb2ba; }
.w34 { width: 34px; } .w42 { width: 42px; } .w58 { width: 58px; } .w59 { width: 59px; } .w60 { width: 60px; } .w64 { width: 64px; } .w65 { width: 65px; } .w67 { width: 67px; } .w68 { width: 68px; } .w70 { width: 70px; } .w74 { width: 74px; }
.car::after { content: ""; display: inline-block; width: 0; height: 0; border: 3px solid transparent; border-top: 3.5px solid #777c88; border-bottom: 0; margin-left: 3px; vertical-align: 3px; }
.rsep { width: 1px; height: 60px; background: #eceef1; flex: none; }
.rs1 { margin-left: 8px; }
.rs2 { margin-left: 6px; }
.rs3 { margin-left: 6px; }
.checks { width: 268px; padding: 4px 0 0 6px; display: grid; grid-template-columns: 79px 84px auto; grid-auto-rows: 26px; font-size: 12px; }
.ck { display: flex; align-items: center; gap: 3px; position: relative; white-space: nowrap; height: 14px; }
.ck::before { content: ""; width: 14px; height: 14px; border: 1px solid #bfc2c9; border-radius: 2px; background: #fff; flex: none; }
.ck.on::after { content: ""; position: absolute; left: 3.5px; top: 2px; width: 7px; height: 4.5px; border-left: 1.5px solid #333; border-bottom: 1.5px solid #333; transform: rotate(-45deg); }
.rstack { width: 81px; padding: 4px 0 0 1px; display: flex; flex-direction: column; gap: 11px; color: #aeb2ba; font-size: 12px; }
.rs-item { display: flex; align-items: center; gap: 6px; height: 15px; white-space: nowrap; }
.pct { font: 10px "Liberation Sans", sans-serif; fill: #3a4050; }
.oneone { font: 10px "Liberation Sans", sans-serif; fill: #3a4050; }
.jsico { font: 10px "Liberation Sans", sans-serif; fill: #3a4050; }
.jsmini { font: 7px "Liberation Sans", sans-serif; fill: #3a4050; }

/* main */
.main { height: 870px; flex: none; display: flex; }
.work { width: 1602px; display: flex; flex-direction: column; }
.formula { height: 46px; flex: none; display: flex; align-items: center; padding: 3px 0 0 7px; }
.namebox { width: 149px; height: 25px; background: #fff; border: 1px solid #dcdfe6; border-radius: 3px; font-size: 15px; color: #333; display: flex; align-items: center; position: relative; padding-left: 59px; }
.tri { width: 0; height: 0; border: 3px solid transparent; border-top: 4px solid #80859a; border-bottom: 0; }
.namebox .tri { position: absolute; right: 4px; top: 10px; }
.fz { margin-left: 44px; }
.fx { font: italic 17px "Liberation Serif", serif; color: #4c566e; margin-left: 10px; width: 15px; }
.finput { width: 1348px; height: 25px; margin-left: 9px; background: #fff; border: 1px solid #dcdfe6; border-radius: 3px; padding-left: 12px; font-size: 16px; line-height: 23px; color: #222; }

.sheetarea { height: 802px; flex: none; display: flex; }
.grid { width: 1584px; position: relative; display: flex; flex-direction: column; }
table { border-collapse: separate; border-spacing: 0; table-layout: fixed; width: 1584px; }
.c-rh { width: 33px; } .c88 { width: 88px; } .c-h { width: 111px; } .c-j { width: 71px; } .c-o { width: 104px; } .c-p { width: 121px; }
th, td { padding: 0; font-weight: 400; text-align: center; overflow: visible; white-space: nowrap; }
.head th { height: 19px; padding-top: 1px; background: #f5f6f8; font-size: 14.5px; line-height: 17px; color: #3a4050; border-right: 1px solid #cdd1dc; border-bottom: 1px solid #a9b1c9; }
.head .corner { position: relative; }
.corner i { position: absolute; right: 3px; bottom: 2px; width: 0; height: 0; border-left: 12px solid transparent; border-bottom: 12px solid #c4c7cf; }
.head .act { background: #d1d4dc; color: #1fb67d; line-height: 16px; border-bottom: 2px solid #1fb67d; border-right-color: #d1d4dc; }
.pane { overflow: hidden; flex: none; background: #fff; }
.pane-top { height: 257px; }
.pane-bottom { height: 523px; }
.pane-bottom table { margin-top: -15px; }
.hsplit { height: 3px; flex: none; background: #1fb67d; }
.vsplit { position: absolute; left: 757px; top: 0; bottom: 0; width: 3px; background: #1fb67d; z-index: 2; }
.pane tr { height: 32px; }
.pane th { height: 32px; background: #f5f6f8; font-size: 14.5px; color: #3a4050; border-right: 1px solid #b4bbd0; border-bottom: 1px solid #d3d6df; }
.pane td { height: 32px; font-size: 14.5px; color: #222; border-right: 1px solid #c7cbd9; border-bottom: 1px solid #c7cbd9; position: relative; }
.pane td.z { font-size: 16px; padding-bottom: 2px; }
.pane td.d { font-size: 15px; padding-bottom: 1px; }
.pane td.h { padding-right: 3px; }
.pane td.j, .head th.j { padding-right: 17px; overflow: hidden; }
.head th.h { padding-right: 3px; }
.pane td.title { text-align: left; padding-left: 676px; overflow: hidden; font-size: 15px; }
.over { display: inline-block; margin: 0 -10px; }
.flt { position: absolute; right: 0; bottom: 0; width: 14px; height: 14px; background: #fff; border: 1px solid #d8dbe2; }
.flt::after { content: ""; position: absolute; left: 3px; top: 4px; border: 3.5px solid transparent; border-top: 5px solid #1fb67d; border-bottom: 0; }
.fh { right: 5px; }
.note::after { content: ""; position: absolute; right: -6px; top: 0; width: 0; height: 0; border-top: 5px solid #0f6a34; border-right: 5px solid transparent; z-index: 1; }
.pane th.act-r { background: #d1d4dc; color: #1fb67d; border-right: 2px solid #1fb67d; }
.sel { position: absolute; left: -1px; top: -1px; right: -1px; bottom: -1px; border: 3px solid #1fb67d; z-index: 1; }
.sel::after { content: ""; position: absolute; right: -5px; bottom: -5px; width: 6px; height: 6px; background: #1fb67d; border: 1px solid #fff; }

.vscroll { width: 18px; flex: none; display: flex; flex-direction: column; background: #e9eaef; }
.vtrack { padding-left: 4px; display: flex; flex-direction: column; align-items: flex-start; }
.vt-top { height: 270px; padding-top: 7px; }
.vt-bottom { height: 518px; padding-top: 4px; }
.arr-up { margin-left: 2px; width: 0; border: 4px solid transparent; border-top: 0; border-bottom: 4px solid #adb2c4; }
.arr-down { margin: auto 0 7px 2px; width: 0; border: 4px solid transparent; border-bottom: 0; border-top: 4px solid #adb2c4; }
.thumb { width: 12px; border-radius: 6px; }
.th-top { height: 42px; margin-top: 10px; background: #d5d7df; }
.th-bottom { height: 94px; margin-top: 143px; background: #c1c4ce; }
.vhandle { height: 14px; background: #f5f6f8; display: flex; align-items: center; justify-content: center; }
.vhandle i { width: 11px; height: 4px; border-top: 1px solid #888ea0; border-bottom: 1px solid #888ea0; }
.vcirc { width: 12px; height: 13px; border-radius: 6px; background: #d5d7df; }
.vc-last { margin-top: auto; margin-bottom: 3px; background: #c9ccd6; }

.sheetbar { height: 22px; flex: none; display: flex; align-items: stretch; background: #f5f6f8; border-bottom: 1px solid #dcdee4; font-size: 12.5px; }
.snav { width: 120px; display: flex; align-items: center; gap: 18.5px; padding-left: 15px; }
.stab { display: flex; align-items: center; justify-content: center; width: 68px; background: #e3e4e8; color: #4c5263; white-space: nowrap; }
.stab-on { width: 79px; background: #fff; color: #1fb67d; }
.stab-3 { width: 69px; }
.stab-sel { width: 100px; background: #b7d3ee; }
.smore { width: 38px; text-align: center; line-height: 17px; font-size: 16px; color: #3a4050; }
.splus { margin: 5px 0 0 0; }
.grip { width: 3px; height: 12px; border-left: 1px solid #a4a8b3; border-right: 1px solid #a4a8b3; align-self: center; }
.g1 { margin-left: 19px; }
.g2 { margin-left: 5px; }
.hs { align-self: center; height: 14px; background: #e8e9ee; display: flex; align-items: center; position: relative; }
.hs-left { width: 237px; margin-left: 6.5px; }
.hs-right { width: 818px; margin-left: 6px; }
.la { width: 0; border: 3px solid transparent; border-left: 0; border-right: 4px solid #7c8296; margin-left: 6px; }
.ra { width: 0; border: 3px solid transparent; border-right: 0; border-left: 4px solid #7c8296; margin-left: auto; margin-right: 6px; }
.hthumb { height: 14px; border-radius: 7px; background: #d2d5dc; }
.ht-left { width: 50px; margin-left: 11px; }
.ht-right { width: 247px; margin-left: 267px; }

.side { width: 45px; border-left: 1px solid #e2e3e8; background: #f5f6f8; display: flex; flex-direction: column; align-items: center; padding-top: 11px; }
.s-dash { width: 20px; height: 5px; border-top: 1px solid #c9ccd4; border-bottom: 1px solid #c9ccd4; margin-bottom: 19px; }
.s-i { margin-bottom: 15.8px; }

/* status */
.status { height: 28px; flex: none; display: flex; align-items: center; background: #f5f6f8; padding-left: 15px; font-size: 12.5px; }
.stsep { width: 1px; height: 14px; background: #dcdee3; margin-left: 15px; }
.st-val { margin-left: 18px; }
.st-right { margin-left: auto; display: flex; align-items: center; width: 427px; }
.st-tri { margin-left: 5px; }
.st-s1 { margin-left: 13px; }
.vb { width: 24px; height: 24px; display: flex; align-items: center; justify-content: center; margin-left: 2px; border-radius: 2px; }
.vb-on { background: #dde0e5; margin-left: 9px; }
.st-s2 { margin-left: 11px; }
.zoomv { margin-left: 10px; color: #3a4050; font-size: 13px; }
.st-tri2 { margin-left: 4px; }
.zminus { width: 10px; height: 2px; background: #3f4a63; margin-left: 12px; }
.slider { width: 142px; height: 1px; background: #3f4a63; margin-left: 12px; position: relative; }
.slider i { position: absolute; left: 63px; top: -6px; width: 13px; height: 13px; border-radius: 50%; border: 1px solid #444; background: rgba(190, 200, 170, .5); }
.zplus { margin-left: 8px; }
.zfull { margin-left: 13px; }
.taskbar { height: 4px; flex: none; background: #1f3a44; position: relative; }
.taskbar i { position: absolute; left: 630px; top: 0; width: 160px; height: 4px; background: #46606b; }

/* overlays */
.ime { position: absolute; left: 1150px; top: 1011px; width: 60px; height: 26px; background: #fff; border-radius: 5px; box-shadow: 0 1px 4px rgba(0, 0, 0, .45); display: flex; align-items: center; justify-content: center; gap: 3px; font-size: 12.5px; color: #444; z-index: 5; }
.mark { position: absolute; left: 1488px; top: 993px; width: 159px; height: 42px; display: flex; z-index: 5; pointer-events: none; }
.mark-txt { display: flex; flex-direction: column; margin-left: -2px; }
.mark-zh { font-size: 21px; line-height: 24px; height: 24px; font-weight: 700; color: #5c9bd8; white-space: nowrap; }
.mark-en { font-size: 17px; line-height: 20px; margin-top: 1px; color: #6fcb88; white-space: nowrap; letter-spacing: -.1px; }
.mark-dots { position: absolute; left: 128px; top: -1px; fill: none; stroke: #555; stroke-width: .8; }
.overlay { position: absolute; left: 0; top: 0; pointer-events: none; z-index: 4; }
.arrows line { stroke: #f40000; stroke-width: 3.5; stroke-linecap: round; }
.arrows { filter: drop-shadow(2px 3px 2px rgba(0, 0, 0, .45)); }
.stamptext { font: 12.5px "Noto Sans CJK SC", sans-serif; fill: #f21616; stroke: #f21616; stroke-width: .2; }
```
